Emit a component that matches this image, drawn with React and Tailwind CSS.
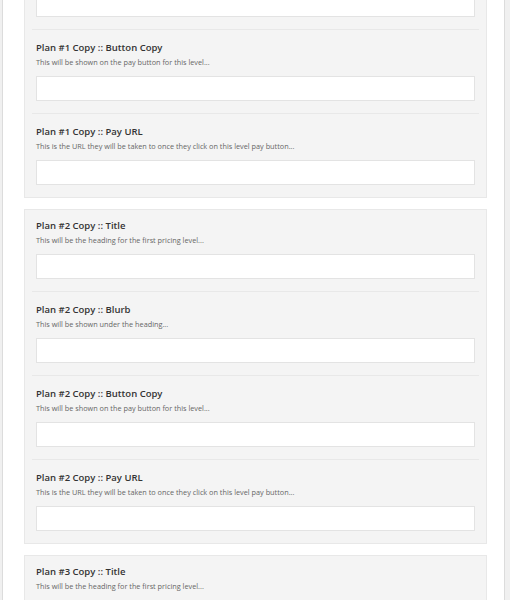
import React from 'react';

const plans = [
  {
    id: 1,
    fields: [
      { label: 'Title', help: 'This will be the heading for the first pricing level...' },
      { label: 'Blurb', help: 'This will be shown under the heading...' },
      { label: 'Button Copy', help: 'This will be shown on the pay button for this level...' },
      { label: 'Pay URL', help: 'This is the URL they will be taken to once they click on this level pay button...' },
    ],
  },
  {
    id: 2,
    fields: [
      { label: 'Title', help: 'This will be the heading for the first pricing level...' },
      { label: 'Blurb', help: 'This will be shown under the heading...' },
      { label: 'Button Copy', help: 'This will be shown on the pay button for this level...' },
      { label: 'Pay URL', help: 'This is the URL they will be taken to once they click on this level pay button...' },
    ],
  },
  {
    id: 3,
    fields: [
      { label: 'Title', help: 'This will be the heading for the first pricing level...' },
      { label: 'Blurb', help: 'This will be shown under the heading...' },
    ],
  },
];

const Field = ({ plan, field, first }) => (
  <div className={first ? 'px-[4px] pt-[9px] pb-[12px]' : 'px-[4px] pt-[11px] pb-[12px] border-t border-[#e8e8e8]'}>
    <label className="block text-[9.5px] leading-[14px] font-semibold text-[#333]">
      Plan #{plan} Copy :: {field.label}
    </label>
    <p className="text-[7.3px] leading-[14px] text-[#666]">{field.help}</p>
    <input
      type="text"
      className="mt-[7px] block w-full h-[25px] bg-white border border-[#e3e3e3] outline-none"
    />
  </div>
);

const App = () => {
  return (
    <div className="h-[600px] overflow-hidden bg-[#f0f0f0] pl-[2px] pr-[5px]" style={{ fontFamily: '"Open Sans", "Liberation Sans", sans-serif' }}>
      <div className="h-full overflow-hidden bg-white border-l border-r border-[#dcdcdc]">
        <div className="mt-[-137px] pl-[21px] pr-[17px] flex flex-col gap-[11px]">
          {plans.map((p) => (
            <div key={p.id} className="bg-[#f4f4f4] border border-[#e8e8e8] px-[7px]">
              {p.fields.map((f, i) => (
                <Field key={f.label} plan={p.id} field={f} first={i === 0} />
              ))}
            </div>
          ))}
        </div>
      </div>
    </div>
  );
};

export default App;
